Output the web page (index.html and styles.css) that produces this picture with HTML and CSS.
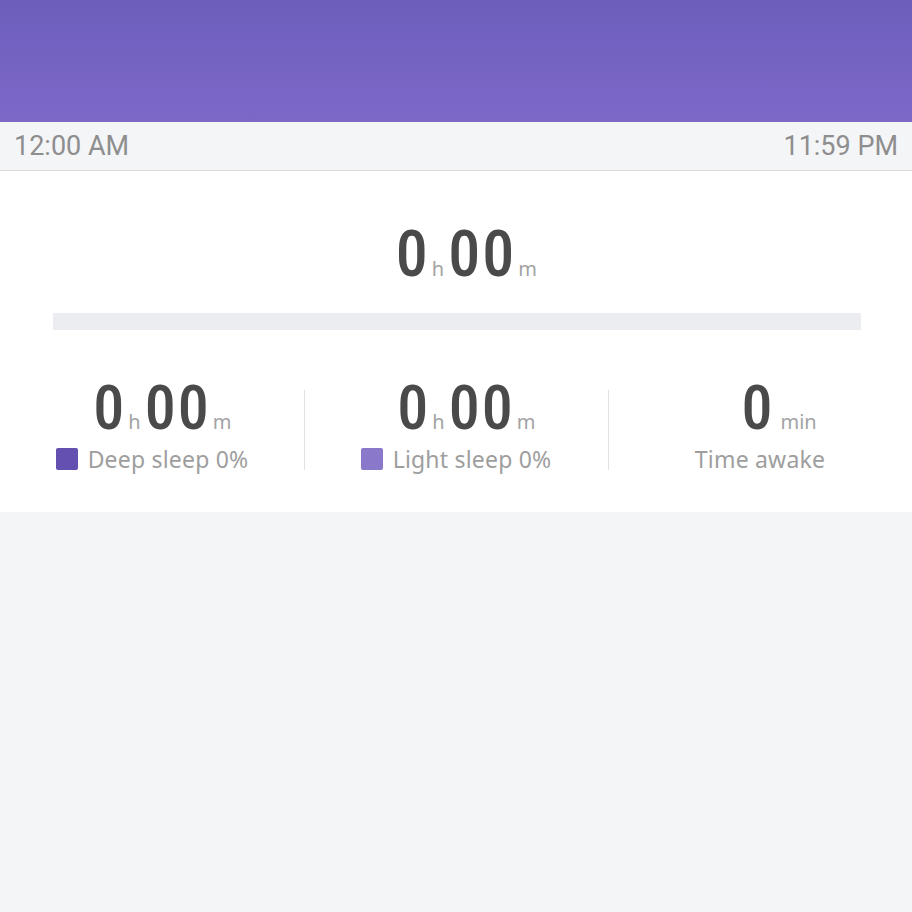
FILE: index.html
```html
<!DOCTYPE html>
<html>
<head>
<meta charset="utf-8">
<link rel="stylesheet" href="styles.css">
</head>
<body>
<div class="header"></div>
<div class="timebar">
  <span>12:00 AM</span>
  <span>11:59 PM</span>
</div>
<div class="card">
  <div class="total">
    <span class="num">0</span><span class="unit">h</span><span class="num">00</span><span class="unit tail">m</span>
  </div>
  <div class="track"></div>
  <div class="stats">
    <div class="stat">
      <div class="value"><span class="num">0</span><span class="unit">h</span><span class="num">00</span><span class="unit tail">m</span></div>
      <div class="label"><span class="sw deep"></span>Deep sleep 0%</div>
    </div>
    <div class="stat">
      <div class="value"><span class="num">0</span><span class="unit">h</span><span class="num">00</span><span class="unit tail">m</span></div>
      <div class="label"><span class="sw light"></span>Light sleep 0%</div>
    </div>
    <div class="stat">
      <div class="value"><span class="num">0</span><span class="unit tail min">min</span></div>
      <div class="label">Time awake</div>
    </div>
  </div>
</div>
</body>
</html>
```
FILE: styles.css
```css
html, body { margin: 0; padding: 0; }
body {
  background: #f4f5f7;
  font-family: "Noto Sans", sans-serif;
  width: 912px;
  height: 912px;
  overflow: hidden;
}
.header {
  height: 122px;
  background: linear-gradient(#6d5ebc, #7d68c8);
}
.timebar {
  height: 48px;
  background: #f4f5f7;
  border-bottom: 1px solid #dcdcdf;
  display: flex;
  justify-content: space-between;
  align-items: center;
  padding: 0 14px;
  font-family: Roboto, sans-serif;
  font-size: 27px;
  color: #8e8e8e;
}
.card {
  background: #fff;
  height: 341px;
  padding-top: 1px;
  box-sizing: border-box;
}
.total {
  display: flex;
  justify-content: center;
  align-items: baseline;
  margin-top: 48px;
  height: 70px;
  line-height: 70px;
  padding-left: 2px;
}
.num {
  font-family: Roboto, sans-serif;
  font-weight: 500;
  font-stretch: condensed;
  font-size: 64px;
  color: #4a4a4a;
  letter-spacing: 2px;
}
.unit {
  font-family: "Noto Sans", sans-serif;
  font-size: 20px;
  color: #a3a3a3;
  margin: 0 4px 0 2px;
}
.unit.tail {
  width: 0;
  margin: 0 0 0 2px;
  overflow: visible;
  white-space: nowrap;
}
.track {
  margin: 23px 51px 0 53px;
  height: 17px;
  background: #ebedf0;
}
.stats {
  display: grid;
  grid-template-columns: repeat(3, 1fr);
  margin-top: 45px;
}
.stat {
  display: flex;
  flex-direction: column;
  align-items: center;
  position: relative;
}
.stat + .stat::before {
  content: "";
  position: absolute;
  left: 0;
  top: 15px;
  height: 80px;
  width: 1px;
  background: #e2e2e2;
}
.stat .value {
  display: flex;
  align-items: baseline;
  height: 66px;
  line-height: 66px;
  padding-left: 2px;
}
.stat .num { font-size: 62px; }
.stat .unit.min { margin-left: 6px; }
.label {
  display: flex;
  align-items: center;
  font-size: 23px;
  letter-spacing: 0.2px;
  color: #9e9e9e;
  margin-top: 3px;
  height: 30px;
  line-height: 30px;
}
.sw {
  width: 22px;
  height: 22px;
  border-radius: 2px;
  margin-right: 10px;
}
.sw.deep { background: #6350b0; }
.sw.light { background: #8a78ca; }
```
